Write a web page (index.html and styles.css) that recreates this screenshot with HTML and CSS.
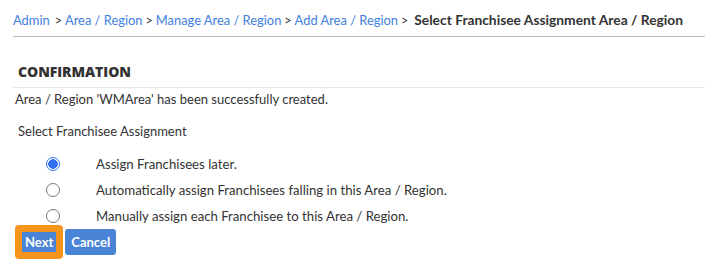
FILE: index.html
```html
<!DOCTYPE html>
<html>
<head>
<meta charset="utf-8">
<link rel="stylesheet" href="styles.css">
</head>
<body>
<div class="page">
  <nav class="crumbs">
    <a href="#">Admin</a><span class="sep sep-first">&gt;</span><a href="#">Area / Region</a><span class="sep">&gt;</span><a href="#">Manage Area / Region</a><span class="sep">&gt;</span><a href="#">Add Area / Region</a><span class="sep">&gt;</span><strong class="current">Select Franchisee Assignment Area / Region</strong>
  </nav>
  <section class="panel">
    <h2 class="title">CONFIRMATION</h2>
    <p class="msg">Area / Region 'WMArea' has been successfully created.</p>
    <p class="label">Select Franchisee Assignment</p>
    <div class="options">
      <label class="opt"><span class="radio checked"></span><span class="opt-text">Assign Franchisees later.</span></label>
      <label class="opt"><span class="radio"></span><span class="opt-text">Automatically assign Franchisees falling in this Area / Region.</span></label>
      <label class="opt"><span class="radio"></span><span class="opt-text">Manually assign each Franchisee to this Area / Region.</span></label>
    </div>
    <div class="actions">
      <button class="btn btn-focus">Next</button>
      <button class="btn">Cancel</button>
    </div>
  </section>
</div>
</body>
</html>
```
FILE: styles.css
```css
html, body { margin: 0; padding: 0; background: #fff; }
body {
  font-family: "Source Sans Pro", "Lato", "Liberation Sans", sans-serif;
  font-size: 13px;
  color: #333;
}
.page { padding: 0 0 0 13px; }
.crumbs {
  height: 36px;
  line-height: 40px;
  border-bottom: 1px solid #b9b9b9;
  font-size: 12.9px;
  white-space: nowrap;
}
.crumbs a { color: #3f80dd; text-decoration: none; }
.sep { color: #333; margin: 0 3px 0 3px; font-size: 12.5px; }
.sep-first { margin-left: 5px; }
.current { font-weight: 700; color: #333; margin-left: 3px; font-size: 13.8px; }
.panel { padding-top: 26px; }
.title {
  margin: 0 0 0 5px;
  font-family: "Open Sans", "Liberation Sans", sans-serif;
  font-weight: 800;
  font-size: 14px;
  letter-spacing: -0.05px;
  line-height: 18px;
  height: 24px;
  color: #333;
}
.msg {
  margin: 0;
  border-top: 1px solid #e8e8e8;
  padding: 2px 0 0 2px;
  line-height: 18px;
}
.label {
  margin: 14px 0 0 5px;
  line-height: 18px;
}
.options { margin-top: 14px; display: flex; flex-direction: column; gap: 7px; font-size: 13.2px; }
.opt { display: flex; align-items: center; height: 19px; }
.radio {
  width: 12px; height: 12px;
  border: 1px solid #777;
  border-radius: 50%;
  margin-left: 33px;
  box-sizing: content-box;
  position: relative;
}
.radio.checked {
  border-color: #2f6ff0;
  background: radial-gradient(circle, #2f6ff0 0 4.5px, #fff 5px);
}
.opt-text { margin-left: 36px; }
.actions { display: flex; align-items: center; gap: 2px; margin-top: 0; margin-left: 2px; }
.btn {
  font-family: inherit;
  font-size: 13px;
  font-weight: 700;
  color: #fff;
  background: #4a84d6;
  border: 0;
  border-radius: 3px;
  height: 26px;
  padding: 0 6px;
}
.btn-focus {
  border: 7px solid #f7941d;
  border-radius: 4px;
  height: 34px;
  padding: 0 3px;
  line-height: 20px;
}
```
